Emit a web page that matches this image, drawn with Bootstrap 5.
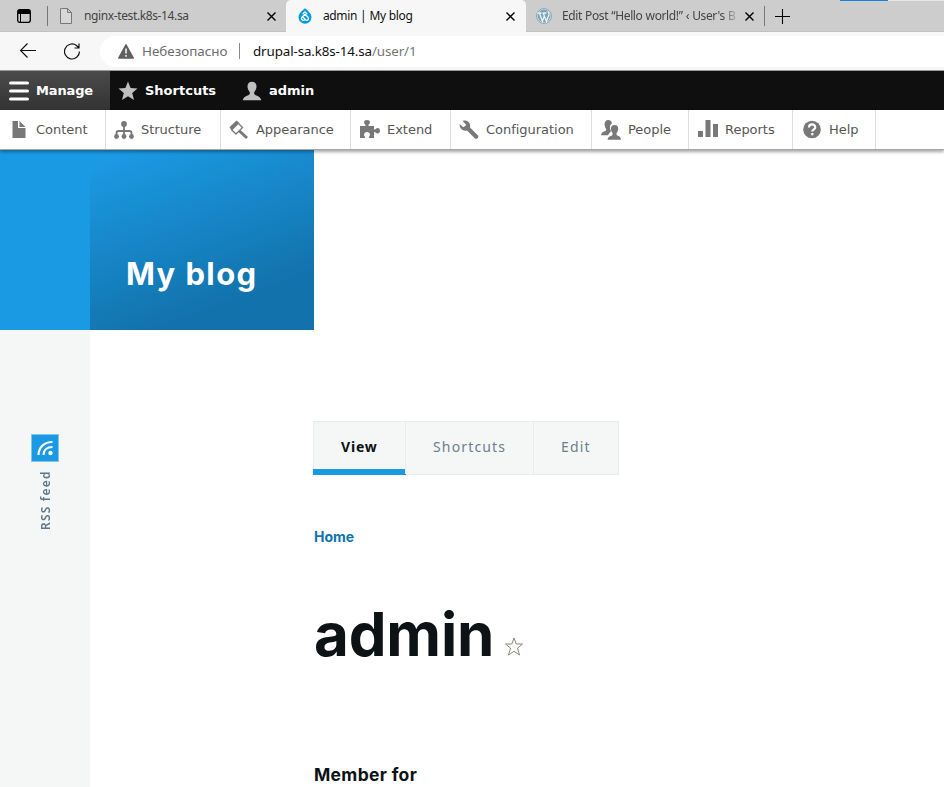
<!DOCTYPE html>
<html lang="en">
<head>
<meta charset="utf-8">
<title>admin | My blog</title>
<link href="https://cdn.jsdelivr.net/npm/bootstrap@5.3.0/dist/css/bootstrap.min.css" rel="stylesheet">
<style>
body{width:944px;height:787px;overflow:hidden;background:#fff;font-family:"Noto Sans","Open Sans",sans-serif;color:#0d1214}
svg{display:block;flex:none}
.chrome-tabs{height:32px;background:#cdcdcd;font-size:12px;line-height:32px;color:#444;letter-spacing:-.38px;word-spacing:.4px;box-shadow:inset 0 -1px #c2c2c2}
.win-btn{width:47px;padding-left:17px}
.tab-sep{width:1px;height:20px;background:#777}
.tab-one{width:238px;padding-left:12px}
.tab-one svg:last-child{margin-right:9px}
.tab-active{width:240px;background:#f7f7f7;border-radius:5px 5px 0 0;padding-left:12px;color:#111}
.tab-active svg:last-child{margin-right:10px}
.tab-three{width:238px;padding-left:10px}
.tab-three svg:last-child{margin-right:9px}
.tab-label{white-space:nowrap}
.tab-gap{margin-left:11px}
.plus-gap{margin-left:10px}
.fade-label{width:176px;margin-left:10px;-webkit-mask-image:linear-gradient(90deg,#000 160px,transparent 178px);mask-image:linear-gradient(90deg,#000 160px,transparent 178px)}
.progress-hint{left:840px;top:0;width:48px;height:1px;background:#1f7fd0}
.progress-rest{left:888px;top:0;width:56px;height:1px;background:#e6e6e6}
.address-row{height:39px;background:#f7f7f7;border-bottom:1px solid #999}
.nav-icons{width:100px;padding-left:20px;gap:27px}
.address-box{height:31px;background:#fff;border-radius:16px 0 0 16px;padding-left:18px;font-size:13.400px;white-space:nowrap}
.insecure{color:#6d6d6d;width:86px;margin-left:8px}
.addr-sep{width:1px;height:16px;background:#888;margin:0 13px 0 11px}
.url-text{letter-spacing:-.13px}
.url-host{color:#111}.url-path{color:#767676}
.admin-bar{height:39px;background:#0f0f0f;font:700 13px/39px "DejaVu Sans",sans-serif;color:#fff}
.bar-gap{margin-left:7px}
.bar-manage{width:110px;padding-left:9px;background:linear-gradient(#4b4b4b,#333);letter-spacing:-.15px}
.bar-short{width:124px;padding-left:8px}
.tray{height:40px;background:#fff;border-bottom:1px solid #a6a6a6;box-shadow:0 2px 3px rgba(0,0,0,.35);font:13px/39px "DejaVu Sans",sans-serif;color:#565656;z-index:2}
.tray-item{border-right:1px solid #ddd}
.tray-item svg{fill:#787878}
.tray-item span{margin-left:7px;letter-spacing:-.03px}
.tray-item .content-label{margin-left:10px}
.side{width:90px;background:#f5f7f7}
.side-top{height:180px;background:#1b9ae4}
.brand{width:224px;height:180px;background:linear-gradient(160deg,#1b9ae4 5%,#1272ab 78.66%);padding:100px 0 0 36px;font:700 31px/48px Inter,sans-serif;letter-spacing:1.400px;color:#fff}
.rss-icon{width:28px;height:28px;margin:104px 0 0 31px;background:#1b9ae4;border:1px solid #86c5eb}
.rss-text{writing-mode:vertical-rl;transform:rotate(180deg);margin:9px 0 0 37px;height:59px;width:18px;font:600 12px/18px "Noto Sans",sans-serif;color:#5c7889;letter-spacing:1.200px}
.content-col{padding-left:223px}
.task-tabs{margin-top:91px;width:306px;height:54px;border:1px solid #e7edef;background:#f5f7f7;font-size:14px;line-height:50px;color:#6c7f8b;letter-spacing:1.150px}
.task-view{width:93px;margin:0 0 -1px -1px;padding-left:28px;border-bottom:6px solid #1b9ae4;color:#0d1214;font-weight:700;letter-spacing:.8px}
.task-other{border-left:1px solid #e7edef;padding-left:27px}
.task-short{width:128px;margin-left:-1px}.task-edit{width:85px}
.crumb{margin:49px 0 0;height:26px;font:700 14px/26px Inter,sans-serif;letter-spacing:0;color:#0f73ac;padding-left:1px}
.user-name{margin:44px 0 0 1px;height:80px;font:700 60px/80px Inter,sans-serif}
.user-name span{letter-spacing:-.15px}
.user-name svg{margin:43px 0 0 10px}
.member{margin:88px 0 0 1px;font:700 17.500px/26px Inter,sans-serif;letter-spacing:.32px}
.page-main{height:637px}
</style>
<script src="https://cdn.jsdelivr.net/npm/bootstrap@5.3.0/dist/js/bootstrap.bundle.min.js"></script>
</head>
<body class="position-relative">
<header>
 <div class="chrome-tabs d-flex align-items-center">
  <div class="win-btn"><svg width="14" height="14" viewBox="0 0 14 14"><rect x=".7" y=".7" width="12.6" height="12.6" rx="2" fill="none" stroke="#000" stroke-width="1.3"/><path d="M1 1h12v4H1z"/><path d="M3.5 4v9" stroke="#000"/></svg></div>
  <div class="tab-sep"></div>
  <div class="tab-one d-flex align-items-center">
   <svg width="12" height="16" viewBox="0 0 12 16" fill="#d8d8d8" stroke="#777"><path d="M1.5.5h6l4 4v11h-11v-15zM7.5.5v4h4"/></svg>
   <span class="tab-label ms-2 ps-1">nginx-test.k8s-14.sa</span>
   <svg class="ms-auto" width="11" height="11" viewBox="0 0 11 11" stroke="#000" stroke-width="1.4"><path d="M1.5 1.5l8 8m0-8l-8 8"/></svg>
  </div>
  <div class="tab-active d-flex align-items-center">
   <svg width="14" height="16" viewBox="0 0 14 16"><path d="M7 0c1 2 6.500 4.500 6.500 9.200a6.500 6.500 0 0 1-13 0C.5 4.500 6 2 7 0z" fill="#009cde"/><path d="M4.800 6L7 4l2.200 2M7 6.300l3.200 3.200a1.800 1.800 0 0 1-2.500 2.500L4.900 9M7 6.300L3.800 9.500A1.800 1.800 0 0 0 6.300 12l1.200-1.200" fill="none" stroke="#fff" stroke-width="1.300"/></svg>
   <span class="tab-label tab-gap">admin | My blog</span>
   <svg class="ms-auto" width="11" height="11" viewBox="0 0 11 11" stroke="#000" stroke-width="1.4"><path d="M1.500 1.500l8 8m0-8l-8 8"/></svg>
  </div>
  <div class="tab-three d-flex align-items-center">
   <svg width="16" height="16" viewBox="0 0 16 16"><circle cx="8" cy="8" r="7.400" fill="#e5edf0" stroke="#7ba4b8" stroke-width="1"/><circle cx="8" cy="8" r="6.400" fill="#7ba4b8"/><path d="M1.500 5h4M6.500 5h4M3.400 5l3 8.400L8.300 8M7.200 5l3.200 8.400L13 6.500c.3-1.500-.8-2-.8-3.300" fill="none" stroke="#eef3f5" stroke-width="1.300"/></svg>
   <span class="tab-label fade-label">Edit Post “Hello world!” ‹ User's B</span>
   <svg class="ms-auto" width="11" height="11" viewBox="0 0 11 11" stroke="#000" stroke-width="1.400"><path d="M1.500 1.500l8 8m0-8l-8 8"/></svg>
  </div>
  <div class="tab-sep"></div>
  <svg class="plus-gap" width="15" height="15" viewBox="0 0 15 15" stroke="#000" stroke-width="1.100"><path d="M7.500 0v15M0 7.500h15"/></svg>
  <div class="progress-hint position-absolute"></div><div class="progress-rest position-absolute"></div>
 </div>
 <div class="address-row d-flex align-items-center">
  <div class="nav-icons d-flex align-items-center">
   <svg width="17" height="16" viewBox="0 0 17 16" fill="none" stroke="#111" stroke-width="1.200"><path d="M16 7.500H.8M7.500.5l-7 7 7 7"/></svg>
   <svg width="17" height="17" viewBox="0 0 17 17" fill="none" stroke="#111" stroke-width="1.200"><path d="M15.500 8.500A7.500 7.500 0 1 1 12.500 2.500L15 5M15 .5V5H10.500"/></svg>
  </div>
  <div class="address-box d-flex align-items-center flex-grow-1">
   <svg width="16" height="15" viewBox="0 0 16 15"><path d="M8 .8L15.300 14H.7z" fill="#5f5f5f" stroke="#5f5f5f" stroke-width="1.400" stroke-linejoin="round"/><path d="M8 4.500v5M8 11v1.700" stroke="#fff" stroke-width="1.500"/></svg>
   <span class="insecure">Небезопасно</span><span class="addr-sep"></span>
   <span class="url-text"><span class="url-host">drupal-sa.k8s-14.sa</span><span class="url-path">/user/1</span></span>
  </div>
 </div>
</header>
<nav>
 <div class="admin-bar d-flex">
  <div class="bar-manage d-flex align-items-center"><svg width="20" height="20" viewBox="0 0 20 20" stroke="#fff" stroke-width="3.200" stroke-linecap="round"><path d="M1.600 2h16.800M1.600 10h16.800M1.600 18h16.800"/></svg><span class="bar-gap">Manage</span></div>
  <div class="bar-short d-flex align-items-center"><svg width="20" height="20" viewBox="0 0 20 20" fill="#bfbfbf"><path d="M10 .5l2.600 6.400 6.900.6-5.300 4.400 1.800 7.100L10 15.200 4 19l1.800-7.100L.5 7.500l6.900-.6z"/></svg><span class="bar-gap">Shortcuts</span></div>
  <div class="d-flex align-items-center ps-2"><svg width="20" height="20" viewBox="0 0 20 20" fill="#bfbfbf"><path d="M10 .8c3 0 4.600 1.800 4.500 5-.1 2.200-1.200 4-2.200 5.200-.5 1.600 0 2.700 1.400 3.300 2.800 1 4.800 1.800 5.600 4.900H.7c.8-3.100 2.800-3.900 5.600-4.900 1.400-.6 1.900-1.700 1.400-3.300-1-1.200-2.100-3-2.200-5.200C5.400 2.600 7 .8 10 .8z"/></svg><span class="bar-gap">admin</span></div>
 </div>
 <div class="tray d-flex position-relative">
  <div class="tray-item d-flex align-items-center" style="width:106px;padding-left:12px"><svg width="14" height="17" viewBox="0 0 14 17"><path d="M.5 0H6v7h7.500v10H.5z"/><path d="M7.500 0l6 6h-6z"/></svg><span class="content-label">Content</span></div>
  <div class="tray-item d-flex align-items-center" style="width:115px;padding-left:8px"><svg width="20" height="18" viewBox="0 0 20 18"><circle cx="10" cy="3" r="2.900"/><path d="M10 4v12M2.500 16v-4q0-2 2-2h11q2 0 2 2v4" fill="none" stroke="#787878" stroke-width="1.800"/><circle cx="2.500" cy="15.500" r="2.400"/><circle cx="10" cy="15.500" r="2.400"/><circle cx="17.500" cy="15.500" r="2.400"/></svg><span>Structure</span></div>
  <div class="tray-item d-flex align-items-center" style="width:130px;padding-left:8px"><svg width="20" height="20" viewBox="0 0 20 20"><path d="M7.500.5L.5 7.300l2.300 3.400L10.500 3z"/><path d="M2.800 10l4.200 4 6.500-6.500L9.500 3.500M9.500 11l3 2" fill="none" stroke="#787878" stroke-width="1.300"/><path d="M10.500 11l7.500 7" stroke="#787878" stroke-width="3"/></svg><span>Appearance</span></div>
  <div class="tray-item d-flex align-items-center" style="width:100px;padding-left:9px"><svg width="20" height="20" viewBox="0 0 20 20"><path d="M0 6h5.500C6 4.500 4 4 4 2.200 4 .8 5.300 0 7 0s3 .8 3 2.200C10 4 8 4.500 8.500 6H14v3.500c1.500.6 2-1.500 3.700-1.500 1.400 0 2.300 1.200 2.300 2.800s-.9 2.800-2.300 2.800c-1.700 0-2.200-2-3.700-1.500V18H9c-.5-1.500 1-1.800 1-3.300S8.600 12 7 12s-3 1.200-3 2.700S5.500 16.500 5 18H0z"/></svg><span>Extend</span></div>
  <div class="tray-item d-flex align-items-center" style="width:141px;padding-left:8px"><svg width="20" height="20" viewBox="0 0 20 20"><path d="M3.500.7C8-.6 12.200 2.500 11 7.500l8 8c1.300 1.500-1.500 4.300-3 3l-8-8C4.300 11.500.7 9 .5 4l4 3.200L7.300 5z"/></svg><span>Configuration</span></div>
  <div class="tray-item d-flex align-items-center" style="width:97px;padding-left:9px"><svg width="20" height="20" viewBox="0 0 20 20"><path d="M7 0c2.500 0 4 1.200 3.800 3.700C8.500 5 8.500 8 10 11c0 1-2 1.800-3 4.200H0c.5-2.500 1.500-3.200 4-4 1.200-.5 1.500-1.300 1-2.500-2.200-3.200-2-8.700 2-8.700z"/><path d="M13.500 5c2.600 0 3.800 1.500 3.700 4-.1 1.700-.9 3-1.600 3.900-.4 1.300 0 2.300 1 2.800 2 .8 3 1.300 3.400 4H6.500c.5-2.700 1.800-3.300 4-4 1-.5 1.400-1.500 1-2.800C9.200 9.900 9.200 5 13.500 5z"/></svg><span>People</span></div>
  <div class="tray-item d-flex align-items-center" style="width:104px;padding-left:9px"><svg width="20" height="19" viewBox="0 0 20 19"><path d="M0 11h5v6H0zM7.500 0h5v17h-5zM15 4h5v13h-5z"/></svg><span>Reports</span></div>
  <div class="tray-item d-flex align-items-center" style="width:83px;padding-left:10px"><svg width="19" height="19" viewBox="0 0 19 19"><circle cx="9" cy="9.500" r="8.800"/><path d="M6 7.500c0-4 6.200-4 6.200-.3 0 2.500-2.900 2.200-2.900 4.300M9.300 13v2.300" fill="none" stroke="#fff" stroke-width="2.200"/></svg><span>Help</span></div>
 </div>
</nav>
<main class="page-main d-flex">
 <aside class="side">
  <div class="side-top"></div>
  <div class="rss-icon"><svg width="26" height="26" viewBox="0 0 26 26" fill="none" stroke="#fff" stroke-width="2.200"><path d="M6.500 20C6.500 12.500 12 7 20.500 7M11.500 20c0-5 3.500-8 9-8"/><circle cx="18.500" cy="18" r="2.200" fill="#fff" stroke="none"/></svg></div>
  <div class="rss-text text-nowrap">RSS feed</div>
 </aside>
 <section class="flex-grow-1">
  <div class="brand text-nowrap">My blog</div>
  <div class="content-col">
   <div class="task-tabs d-flex">
    <div class="task-view">View</div><div class="task-other task-short">Shortcuts</div><div class="task-other task-edit">Edit</div>
   </div>
   <div class="crumb">Home</div>
   <div class="user-name d-flex"><span>admin</span><svg width="20" height="20" viewBox="0 0 20 20" fill="#fff" stroke="#8b8777"><path d="M10 1l2.200 6h6.300l-5 4.200 2 6.800-5.500-3.700L4.500 18l2-6.800-5-4.200h6.300z"/></svg></div>
   <div class="member">Member for</div>
  </div>
 </section>
</main>
</body>
</html>
